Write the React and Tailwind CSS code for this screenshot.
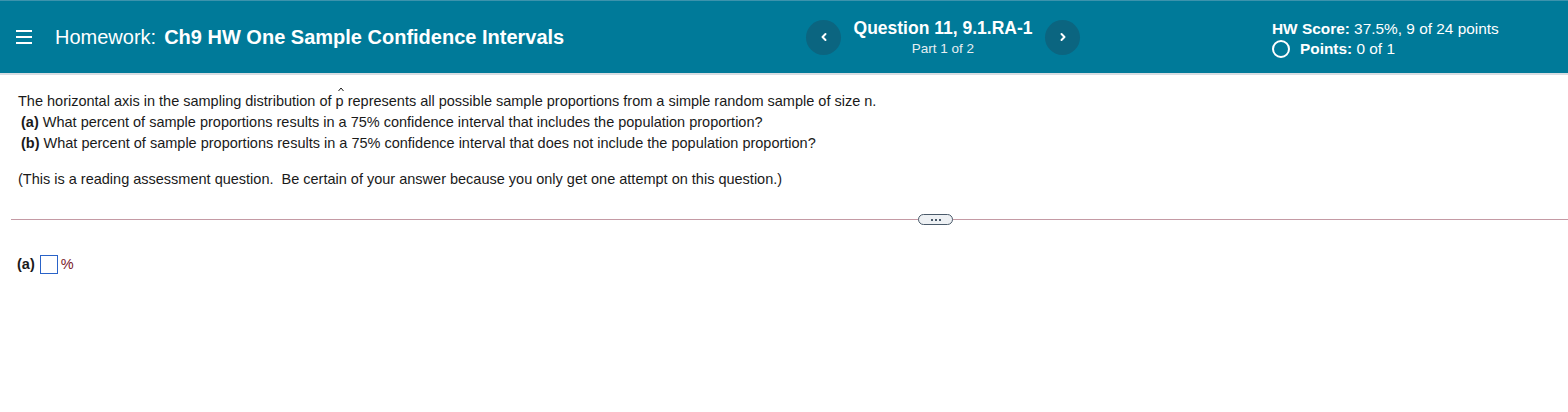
function Chevron({ dir }) {
  return (
    <svg width="8" height="10" viewBox="0 0 8 10" fill="none" stroke="white" strokeWidth="2" strokeLinecap="round" strokeLinejoin="round">
      {dir === 'left' ? <path d="M5.5 2 L2.5 5 L5.5 8" /> : <path d="M2.5 2 L5.5 5 L2.5 8" />}
    </svg>
  );
}

export default function App() {
  return (
    <div className="min-h-[412px] w-full bg-white font-['Liberation_Sans',Arial,sans-serif] text-[#1a1a1a]">
      <header className="flex h-[75px] items-center border-b-2 border-t border-b-[#d8dde2] border-t-[#3c93ad] bg-[#007a99] text-white">
        <div className="flex w-[800px] items-center">
          <div className="ml-[16px] flex w-[16px] flex-col gap-[4px]">
            <span className="h-[2px] w-full bg-white" />
            <span className="h-[2px] w-full bg-white" />
            <span className="h-[2px] w-full bg-white" />
          </div>
          <div className="ml-[23px] text-[20px]">
            Homework:<span className="ml-[8px] font-bold">Ch9 HW One Sample Confidence Intervals</span>
          </div>
        </div>
        <div className="flex items-center">
          <button className="ml-[6px] flex h-[35px] w-[35px] items-center justify-center rounded-full bg-[#0b6580]">
            <Chevron dir="left" />
          </button>
          <div className="flex w-[204px] flex-col items-center">
            <div className="mt-[-1px] text-[17.5px] font-bold leading-[22px]">Question 11, 9.1.RA-1</div>
            <div className="mt-[1px] text-[13.5px] leading-[17px] text-[#e6eef2]">Part 1 of 2</div>
          </div>
          <button className="flex h-[35px] w-[35px] items-center justify-center rounded-full bg-[#0b6580]">
            <Chevron dir="right" />
          </button>
        </div>
        <div className="ml-[192px] mt-[4px] flex flex-col text-[15.4px] leading-[20px]">
          <div>
            <span className="font-bold">HW Score:</span> 37.5%, 9 of 24 points
          </div>
          <div className="flex items-center">
            <span className="mr-[10px] h-[18px] w-[18px] rounded-full border-2 border-white" />
            <span className="font-bold">Points:</span>&nbsp;0 of 1
          </div>
        </div>
      </header>

      <div className="px-[18px] pt-[16px] text-[14.5px] leading-[21px]">
        <p>
          The horizontal axis in the sampling distribution of{' '}
          <span className="relative inline-block">
            p
            <svg className="absolute left-[2px] top-[-4px]" width="6" height="5" viewBox="0 0 6 5" fill="none" stroke="#1a1a1a" strokeWidth="1">
              <path d="M0.5 4 L3 1 L5.5 4" />
            </svg>
          </span>{' '}
          represents all possible sample proportions from a simple random sample of size n.
        </p>
        <p className="pl-[3px]">
          <span className="font-bold">(a)</span> What percent of sample proportions results in a 75% confidence interval that includes the population proportion?
        </p>
        <p className="pl-[3px]">
          <span className="font-bold">(b)</span> What percent of sample proportions results in a 75% confidence interval that does not include the population proportion?
        </p>
        <p className="mt-[15px]">
          (This is a reading assessment question.&nbsp; Be certain of your answer because you only get one attempt on this question.)
        </p>
      </div>

      <div className="relative ml-[11px] mt-[29px] h-[1px] bg-[#c49aa4]">
        <div className="absolute left-[907px] top-[-5px] flex h-[11px] w-[35px] items-center justify-center gap-[2px] rounded-full border border-[#4a5a6a] bg-[#eef1f4]">
          <span className="h-[2px] w-[2px] bg-[#4a5a6a]" />
          <span className="h-[2px] w-[2px] bg-[#4a5a6a]" />
          <span className="h-[2px] w-[2px] bg-[#4a5a6a]" />
        </div>
      </div>

      <div className="ml-[17px] mt-[34px] flex items-center text-[14.5px]">
        <span className="font-bold">(a)</span>
        <span className="ml-[5px] h-[19px] w-[18px] border border-[#2a63c8]" />
        <span className="ml-[3px] text-[#7a1a2a]">%</span>
      </div>
    </div>
  );
}
